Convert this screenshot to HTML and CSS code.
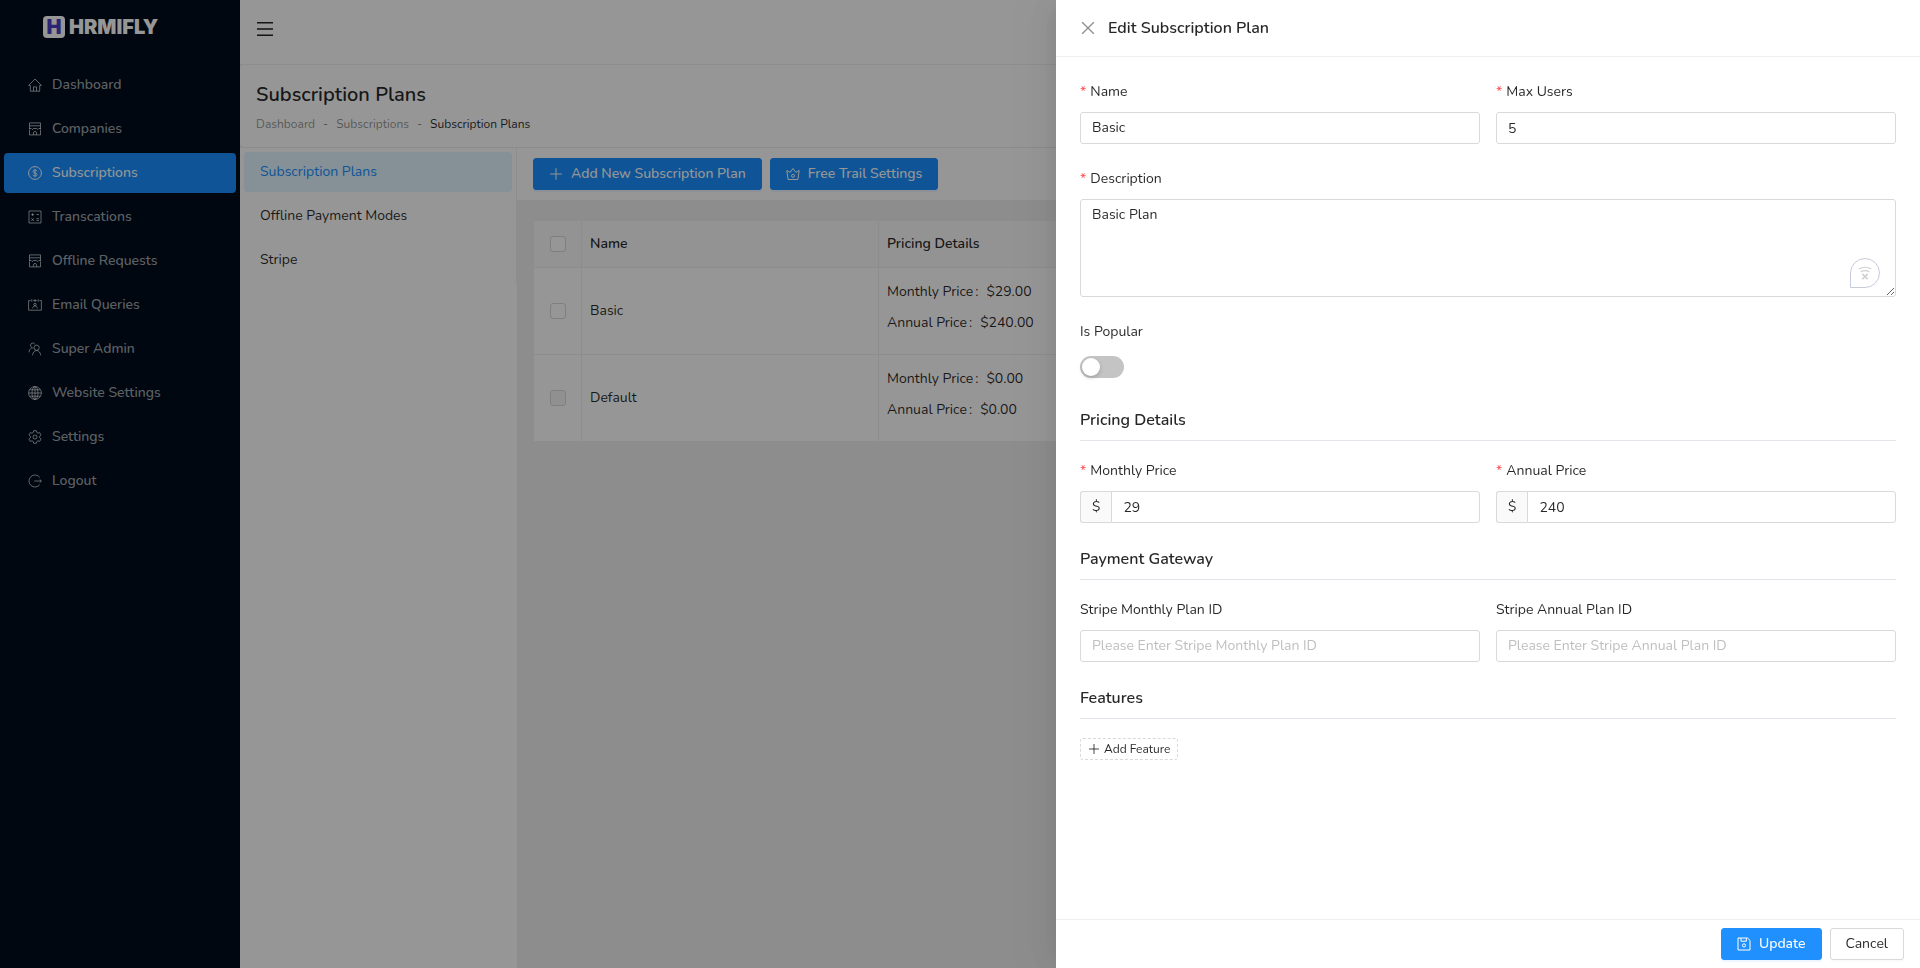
FILE: index.html
```html
<!DOCTYPE html>
<html lang="en">

<head>
	<meta charset="utf-8">
	<meta name="viewport" content="width=device-width, initial-scale=1.0">
	<title>Subscription Plans</title>
	<link rel="stylesheet" href="styles.css">
</head>

<body>

	<!-- shared icons -->
	<svg class="sprite" aria-hidden="true">
		<symbol id="i-shop" viewBox="0 0 14 14">
			<path d="M1.5.9h11v2.900h-11zM1.500 3.800v3M12.500 3.800v3M1 6.500h2.200l1 1 1.400-1h2.800l1.400 1 1-1H13M1.500 7.500v5.400h11V7.500M5.400 12.800v-1.900c0-1.900 3.200-1.900 3.200 0v1.900"/>
		</symbol>
		<symbol id="i-plus" viewBox="0 0 14 14">
			<path d="M7 1.2v11.6M1.2 7h11.6"/>
		</symbol>
	</svg>

	<div class="layout">

		<aside class="sidebar">
			<div class="logo"><span class="logo-mark">H</span><span class="logo-text">HRMIFLY</span></div>
			<nav class="side-menu">
				<a href="#">
					<svg class="icon" viewBox="0 0 14 14"><path d="M.6 7.4 7 1l6.4 6.4H11.700v5.800H2.300V7.400zM5.500 13V8.900h3V13"/></svg>
					Dashboard
				</a>
				<a href="#">
					<svg class="icon"><use href="#i-shop"/></svg>
					Companies
				</a>
				<a href="#" class="active">
					<svg class="icon" viewBox="0 0 14 14"><circle cx="7" cy="7" r="6.4"/><path d="M9 5.2C8.700 4.400 8 4 7 4c-1.200 0-2 .6-2 1.500C5 7.500 9 6.400 9 8.500 9 9.500 8.200 10 7 10c-1.200 0-1.900-.5-2.100-1.300M7 3v8"/></svg>
					Subscriptions
				</a>
				<a href="#">
					<svg class="icon" viewBox="0 0 14 14"><path d="M1 1h12v12H1zM3.200 4.600h2.800M4.600 3.200V6M8.400 4.600h2.600M8.400 8.700h2.600M8.400 10.400h2.600M3.400 8.300l2.400 2.600M5.800 8.300l-2.400 2.600"/></svg>
					Transcations
				</a>
				<a href="#">
					<svg class="icon"><use href="#i-shop"/></svg>
					Offline Requests
				</a>
				<a href="#">
					<svg class="icon" viewBox="0 0 14 14"><path d="M2.500 2.600H.6v9.600h12.800V2.600h-1.900M5.200 2.600h3.600M3.800 1.200v2.600M10.200 1.200v2.600M7 1.200v2.600"/><circle cx="7" cy="6.500" r="1.200"/><path d="M4.700 10.400c.2-1.600 1-2.500 2.300-2.500s2.100.9 2.300 2.500"/></svg>
					Email Queries
				</a>
				<a href="#">
					<svg class="icon" viewBox="0 0 14 14"><circle cx="8.600" cy="5.700" r="2.600"/><path d="M4.500 13.300c.3-2.800 1.800-4.600 4.100-4.900 2.300.3 3.700 2.100 4.100 4.900M6.800 2.300C6.200 1.200 5.100.8 4 1.200 2.300 1.800 2 4.200 3.600 5.500c.5.400 1 .6 1.700.6M3.800 5.900C2 6.800 1.200 8.200 1.100 10.300"/></svg>
					Super Admin
				</a>
				<a href="#">
					<svg class="icon" viewBox="0 0 14 14"><circle cx="7" cy="7" r="6.400"/><ellipse cx="7" cy="7" rx="3" ry="6.400"/><path d="M.6 7h12.800M7 .6v12.800M1.600 3.800h10.800M1.600 10.200h10.800"/></svg>
					Website Settings
				</a>
				<a href="#">
					<svg class="icon" viewBox="0 0 14 14"><circle cx="7" cy="7" r="2"/><path d="M5.700.7h2.600l.4 1.700 1.300.8 1.700-.6L13 4.900l-1.300 1.300v1.600L13 9.100l-1.300 2.300-1.700-.6-1.300.8-.4 1.700H5.700l-.4-1.700-1.300-.8-1.700.6L1 9.100l1.300-1.300V6.200L1 4.900l1.300-2.300 1.700.6 1.300-.8z"/></svg>
					Settings
				</a>
				<a href="#">
					<svg class="icon" viewBox="0 0 14 14"><path d="M11.700 3.300a6 6 0 1 0 0 7.400M6.200 7h7M11.700 5.400 13.400 7l-1.700 1.600"/></svg>
					Logout
				</a>
			</nav>
		</aside>

		<div class="main">
			<header class="topbar">
				<button type="button" class="menu-toggle" aria-label="Toggle menu">
					<svg viewBox="0 0 16 14"><path d="M0 .7h16M0 7h16M0 13.300h16"/></svg>
				</button>
			</header>

			<div class="page-header">
				<h1>Subscription Plans</h1>
				<div class="breadcrumb">
					<a href="#">Dashboard</a>
					<span class="sep">-</span>
					<a href="#">Subscriptions</a>
					<span class="sep">-</span>
					<span class="current">Subscription Plans</span>
				</div>
			</div>

			<div class="content">
				<div class="sub-col">
					<nav class="sub-menu">
						<a href="#" class="active">Subscription Plans</a>
						<a href="#">Offline Payment Modes</a>
						<a href="#">Stripe</a>
					</nav>
				</div>

				<div class="plans">
					<div class="toolbar">
						<button type="button" class="btn btn-primary">
							<svg class="icon"><use href="#i-plus"/></svg>
							Add New Subscription Plan
						</button>
						<button type="button" class="btn btn-primary">
							<svg class="icon" viewBox="0 0 14 14"><path d="M2.100 12.500h9.800l1.300-9L9.800 5.400 7 1.500 4.200 5.400.8 3.500z"/><circle cx="7" cy="8.800" r="1.500"/></svg>
							Free Trail Settings
						</button>
					</div>

					<div class="table-wrap">
						<table class="plan-table">
							<colgroup>
								<col class="col-check">
								<col class="col-name">
								<col>
							</colgroup>
							<thead>
								<tr>
									<th class="check"><input type="checkbox" aria-label="Select all"></th>
									<th>Name</th>
									<th>Pricing Details</th>
								</tr>
							</thead>
							<tbody>
								<tr>
									<td class="check"><input type="checkbox" aria-label="Select Basic"></td>
									<td>Basic</td>
									<td>
										<div class="price">Monthly Price<span class="colon">:</span>$29.00</div>
										<div class="price">Annual Price<span class="colon">:</span>$240.00</div>
									</td>
								</tr>
								<tr>
									<td class="check"><input type="checkbox" aria-label="Select Default" disabled></td>
									<td>Default</td>
									<td>
										<div class="price">Monthly Price<span class="colon">:</span>$0.00</div>
										<div class="price">Annual Price<span class="colon">:</span>$0.00</div>
									</td>
								</tr>
							</tbody>
						</table>
					</div>
				</div>
			</div>
		</div>
	</div>

	<div class="mask"></div>

	<form class="drawer">
		<div class="drawer-header">
			<button type="button" class="close" aria-label="Close">
				<svg class="icon" viewBox="0 0 14 14"><path d="M1.200 1.200l11.600 11.600M12.800 1.200L1.200 12.800"/></svg>
			</button>
			<h2>Edit Subscription Plan</h2>
		</div>

		<div class="drawer-body">
			<div class="row">
				<div class="field">
					<label class="required" for="name">Name</label>
					<input type="text" id="name" value="Basic">
				</div>
				<div class="field">
					<label class="required" for="max-users">Max Users</label>
					<input type="text" class="number" id="max-users" value="5">
				</div>
			</div>

			<div class="field">
				<label class="required" for="description">Description</label>
				<div class="textarea-wrap">
					<textarea id="description" rows="4">Basic Plan</textarea>
					<span class="checker">
						<svg viewBox="0 0 14 14"><path d="M.8 3c3.600-2.400 8.800-2.400 12.400 0M2.600 6c2.600-1.600 6.200-1.600 8.800 0"/><path class="x" d="M4.300 7.900l5.400 5.400M9.700 7.900l-5.400 5.400"/></svg>
					</span>
				</div>
			</div>

			<div class="field">
				<label for="popular">Is Popular</label>
				<div class="switch-row"><input type="checkbox" role="switch" class="switch" id="popular"></div>
			</div>

			<h3>Pricing Details</h3>
			<div class="row">
				<div class="field">
					<label class="required" for="monthly">Monthly Price</label>
					<div class="input-group">
						<span class="addon">$</span>
						<input type="text" class="number" id="monthly" value="29">
					</div>
				</div>
				<div class="field">
					<label class="required" for="annual">Annual Price</label>
					<div class="input-group">
						<span class="addon">$</span>
						<input type="text" class="number" id="annual" value="240">
					</div>
				</div>
			</div>

			<h3>Payment Gateway</h3>
			<div class="row">
				<div class="field">
					<label for="stripe-monthly">Stripe Monthly Plan ID</label>
					<input type="text" id="stripe-monthly" placeholder="Please Enter Stripe Monthly Plan ID">
				</div>
				<div class="field">
					<label for="stripe-annual">Stripe Annual Plan ID</label>
					<input type="text" id="stripe-annual" placeholder="Please Enter Stripe Annual Plan ID">
				</div>
			</div>

			<h3>Features</h3>
			<button type="button" class="btn-dashed">
				<svg class="icon"><use href="#i-plus"/></svg>
				Add Feature
			</button>
		</div>

		<div class="drawer-footer">
			<button type="button" class="btn btn-primary">
				<svg class="icon" viewBox="0 0 14 14"><path d="M1 1h9.600L13 3.400V13H1zM4 1v3.200h5.400V1"/><circle cx="7" cy="8.400" r="1.600"/></svg>
				Update
			</button>
			<button type="button" class="btn">Cancel</button>
		</div>
	</form>

</body>

</html>
```

FILE: styles.css
```css
*{
	box-sizing: border-box;
}

html,body{
	height: 100%;
	margin: 0;
}

body{
	font-family: Nunito, Lato, sans-serif;
	font-size: 14px;
	line-height: 22px;
	color: rgba(0,0,0,0.85);
	background-color: #f0f0f0;
	overflow: hidden;
}

a{
	color: inherit;
	text-decoration: none;
}

h1,h2,h3{
	margin: 0;
	font-weight: 600;
}

button,input,textarea{
	font: inherit;
	color: inherit;
}

button{
	cursor: pointer;
}

.sprite{
	display: none;
}

.icon{
	width: 14px;
	height: 14px;
	flex: none;
	fill: none;
	stroke: currentColor;
	stroke-width: 1;
}

.layout{
	display: flex;
	height: 100%;
}

/* sidebar */

.sidebar{
	flex: 0 0 240px;
	background-color: #000c1c;
}

.logo{
	display: flex;
	align-items: center;
	gap: 4px;
	height: 61px;
	padding: 0 43px 7px;
}

.logo-mark{
	width: 22px;
	height: 22px;
	border-radius: 4px;
	background-color: #fff;
	color: #4b3fc4;
	font-family: Inter, sans-serif;
	font-size: 20px;
	font-weight: 900;
	text-align: center;
}

.logo-text{
	color: #fff;
	font-family: Inter, sans-serif;
	font-size: 20px;
	font-weight: 900;
}

.side-menu{
	display: flex;
	flex-direction: column;
	gap: 4px;
	padding: 4px;
}

.side-menu a{
	display: flex;
	align-items: center;
	gap: 10px;
	height: 40px;
	padding: 0 24px;
	border-radius: 4px;
	color: rgba(255,255,255,0.65);
	font-weight: 500;
}

.side-menu .active{
	background-color: #1890ff;
	color: #fff;
}

/* main */

.main{
	flex: 1;
	min-width: 0;
	display: flex;
	flex-direction: column;
}

.topbar{
	display: flex;
	height: 65px;
	padding: 22px 17px;
	background-color: #fff;
	border-bottom: 1px solid #f0f0f0;
}

.menu-toggle{
	display: flex;
	width: 16px;
	height: 14px;
	padding: 0;
	border: 0;
	background: none;
}

.menu-toggle svg{
	width: 16px;
	height: 14px;
	stroke: #222;
	stroke-width: 1.4;
}

.page-header{
	padding: 16px 16px 12px;
	background-color: #fff;
	border-bottom: 1px solid #ececec;
	border-radius: 4px;
}

.page-header h1{
	font-size: 20px;
	line-height: 28px;
}

.breadcrumb{
	display: flex;
	gap: 8px;
	padding-top: 4px;
	font-size: 12px;
	color: rgba(0,0,0,0.45);
}

.breadcrumb .current{
	color: rgba(0,0,0,0.85);
}

.content{
	flex: 1;
	display: flex;
}

.sub-col{
	flex: 0 0 277px;
	background-color: #fff;
}

.sub-menu{
	display: flex;
	flex-direction: column;
	gap: 4px;
	padding: 4px;
	border-right: 1px solid #f0f0f0;
}

.sub-menu a{
	height: 40px;
	padding: 0 16px;
	border-radius: 4px;
	line-height: 40px;
}

.sub-menu .active{
	background-color: #e2f6ff;
	color: #1890ff;
}

.plans{
	flex: 1;
	min-width: 0;
}

.toolbar{
	display: flex;
	gap: 8px;
	padding: 10px 16px;
	background-color: #fff;
}

.btn{
	display: flex;
	align-items: center;
	gap: 8px;
	height: 32px;
	padding: 0 15px;
	border: 1px solid #d9d9d9;
	border-radius: 3px;
	background-color: #fff;
	box-shadow: 0 2px 0 rgba(0,0,0,0.02);
}

.btn-primary{
	border-color: #1890ff;
	background-color: #1890ff;
	color: #fff;
	font-weight: 500;
	box-shadow: 0 2px 0 rgba(24,144,255,0.08);
}

.table-wrap{
	padding: 20px 16px;
}

.plan-table{
	width: 100%;
	table-layout: fixed;
	border-collapse: collapse;
	background-color: #fff;
}

.plan-table th,.plan-table td{
	padding: 12px 8px;
	border: 1px solid #f0f0f0;
	text-align: left;
}

.plan-table th{
	background-color: #fafafa;
	font-weight: 600;
}

.plan-table .check{
	padding: 0;
	text-align: center;
}

.col-check{
	width: 48px;
}

.col-name{
	width: 297px;
}

.check input{
	appearance: none;
	display: block;
	width: 16px;
	height: 16px;
	margin: 0 auto;
	border: 1px solid #d9d9d9;
	border-radius: 3px;
	background-color: #fff;
}

.check input:disabled{
	background-color: #f5f5f5;
}

.price{
	padding-bottom: 8px;
	line-height: 23px;
}

.colon{
	margin: 0 8px 0 2px;
}

/* drawer */

.mask{
	position: fixed;
	inset: 0;
	background-color: rgba(0,0,0,0.41);
}

.drawer{
	position: fixed;
	top: 0;
	right: 0;
	bottom: 0;
	display: flex;
	flex-direction: column;
	width: 45%;
	background-color: #fff;
	box-shadow: -6px 0 16px -8px rgba(0,0,0,0.08), -9px 0 28px rgba(0,0,0,0.05), -12px 0 48px 16px rgba(0,0,0,0.03);
}

.drawer .btn-primary{
	border-color: #2090ff;
	background-color: #2090ff;
}

.drawer-header{
	display: flex;
	align-items: center;
	gap: 12px;
	padding: 17px 24px;
	border-bottom: 1px solid #f0f0f0;
}

.drawer-header h2{
	font-size: 16px;
}

.close{
	display: flex;
	padding: 1px;
	border: 0;
	background: none;
	color: rgba(0,0,0,0.45);
}

.close .icon{
	stroke-width: 1.3;
}

.drawer-body{
	flex: 1;
	padding: 24px;
	overflow: auto;
}

.row{
	display: flex;
	gap: 16px;
}

.field{
	flex: 1;
	min-width: 0;
	margin-bottom: 24px;
}

.field label{
	display: block;
	height: 23px;
	margin-bottom: 8px;
}

.required::before{
	content: "*";
	margin-right: 4px;
	color: #ff4d4f;
}

.field input[type="text"]{
	display: block;
	width: 100%;
	height: 32px;
	padding: 3px 11px 5px;
	border: 1px solid #d9d9d9;
	border-radius: 3px;
	background-color: #fff;
}

.field input[type="text"].number{
	padding: 4px 11px;
}

.field input::placeholder{
	color: #bfbfbf;
}

.textarea-wrap{
	position: relative;
}

.field textarea{
	display: block;
	width: 100%;
	height: 98px;
	padding: 4px 11px;
	border: 1px solid #d9d9d9;
	border-radius: 3px;
	resize: vertical;
}

/* floating checker badge over the textarea */
.checker{
	position: absolute;
	right: 16px;
	bottom: 9px;
	display: flex;
	align-items: center;
	justify-content: center;
	width: 30px;
	height: 30px;
	border: 1px solid #c8cbdc;
	border-radius: 15px 15px 15px 0;
	background-color: #fff;
}

.checker svg{
	width: 14px;
	height: 14px;
	fill: none;
	stroke: #d0d0d0;
	stroke-width: 1.1;
}

.checker .x{
	stroke-width: 1.6;
}

.switch-row{
	display: flex;
	height: 32px;
	padding-top: 4px;
}

.switch{
	appearance: none;
	width: 44px;
	height: 22px;
	margin: 0;
	border-radius: 11px;
	background-color: #c4c4c4;
	cursor: pointer;
}

.switch::before{
	content: "";
	display: block;
	width: 18px;
	height: 18px;
	margin: 2px;
	border-radius: 9px;
	background-color: #fff;
	box-shadow: 0 2px 4px rgba(0,35,11,0.2);
}

.switch:checked{
	background-color: #1890ff;
}

.switch:checked::before{
	margin-left: 24px;
}

.drawer h3{
	height: 33px;
	margin-bottom: 19px;
	border-bottom: 1px solid #e2e4ea;
	font-size: 16px;
	line-height: 24px;
}

.input-group{
	display: flex;
}

.addon{
	padding: 4px 11px;
	border: 1px solid #d9d9d9;
	border-right: 0;
	border-radius: 3px 0 0 3px;
	background-color: #fafafa;
}

.input-group input[type="text"]{
	flex: 1;
	border-radius: 0 3px 3px 0;
}

.btn-dashed{
	display: flex;
	align-items: center;
	gap: 4px;
	height: 22px;
	padding: 0 7px;
	border: 1px dashed #d9d9d9;
	border-radius: 3px;
	background-color: #fff;
	font-size: 12px;
}

.btn-dashed .icon{
	width: 12px;
	height: 12px;
}

.drawer-footer{
	display: flex;
	justify-content: flex-end;
	gap: 8px;
	padding: 8px 16px;
	border-top: 1px solid #f0f0f0;
}
```
